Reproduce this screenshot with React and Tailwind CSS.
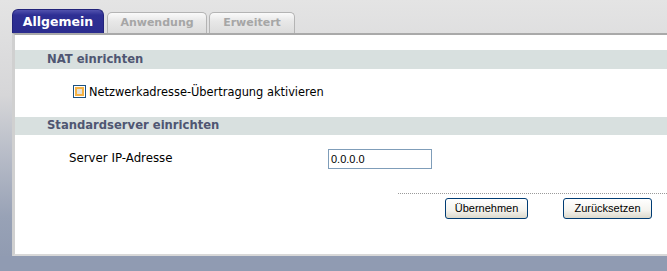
export default function App() {
  const font = { fontFamily: '"DejaVu Sans", Verdana, sans-serif' }
  return (
    <div
      className="w-[667px] h-[271px] flex flex-col overflow-hidden bg-[linear-gradient(180deg,#e4e4e4_0%,#d6d6d8_35%,#b6bbc7_58%,#98a2b6_80%,#8e99b0_100%)]"
      style={font}
    >
      {/* Tabs */}
      <div className="flex items-end pl-[12px] pt-[9px] h-[33px] shrink-0">
        <div className="w-[92px] h-[24px] rounded-t-[6px] bg-[linear-gradient(180deg,#5252ae_0%,#2e2f94_22%,#2b2c8e_100%)] border border-[#22237a] border-b-0 flex items-center justify-center text-white font-bold text-[12.5px] pt-[1px]">
          Allgemein
        </div>
        <div className="ml-[3px] w-[100px] h-[21px] rounded-t-[5px] bg-[linear-gradient(180deg,#fafafa_0%,#e8e8e8_40%,#dcdcdc_100%)] border border-[#b4b4b4] border-b-0 flex items-center justify-center text-[#a6a6a6] font-bold text-[11px]">
          Anwendung
        </div>
        <div className="ml-[2px] w-[86px] h-[21px] rounded-t-[5px] bg-[linear-gradient(180deg,#fafafa_0%,#e8e8e8_40%,#dcdcdc_100%)] border border-[#b4b4b4] border-b-0 flex items-center justify-center text-[#a6a6a6] font-bold text-[11px]">
          Erweitert
        </div>
      </div>

      {/* Panel */}
      <div className="ml-[12px] h-[223px] shrink-0 bg-white border-t-2 border-[#a9a9a9] border-l-[3px] border-l-[#d0d0d0] border-b-[2px] border-b-[#d8d8d8] flex flex-col">
        <div className="mt-[15px] h-[19px] bg-[#d8e0df] flex items-center pl-[32px] text-[#4f5672] font-bold text-[11.6px]">
          NAT einrichten
        </div>

        <div className="h-[48px] flex items-center pl-[58px] text-[11.4px] text-black">
          <span className="w-[13px] h-[13px] border border-[#1c5180] bg-white p-[1px] mr-[3px] mt-[-3px]">
            <span className="block w-full h-full border-2 border-[#f5b244] bg-[#e2e2dc]"></span>
          </span>
          Netzwerkadresse-Übertragung aktivieren
        </div>

        <div className="h-[18px] bg-[#d8e0df] flex items-center pl-[32px] text-[#4f5672] font-bold text-[11.6px]">
          Standardserver einrichten
        </div>

        <div className="mt-[14px] h-[20px] flex items-center pl-[54px] text-[11.8px] text-black">
          <span className="w-[259px]">Server IP-Adresse</span>
          <div
            className="w-[104px] h-[20px] border border-[#7f9db9] flex items-center pl-[2px] text-[11px]"
            style={{ fontFamily: '"Liberation Sans", Tahoma, sans-serif' }}
          >
            0.0.0.0
          </div>
        </div>

        <div className="mt-[24px] ml-[383px] border-t border-dotted border-[#9a9a9a]"></div>

        <div
          className="mt-[4px] flex pl-[430px] gap-[35px] text-[11px] text-black"
          style={{ fontFamily: '"Liberation Sans", Tahoma, sans-serif' }}
        >
          <div className="w-[83px] h-[21px] rounded-[3px] border border-[#003c74] bg-[linear-gradient(180deg,#ffffff_0%,#f4f3ee_60%,#dcd9cc_100%)] flex items-center justify-center">
            Übernehmen
          </div>
          <div className="w-[89px] h-[21px] rounded-[3px] border border-[#003c74] bg-[linear-gradient(180deg,#ffffff_0%,#f4f3ee_60%,#dcd9cc_100%)] flex items-center justify-center">
            Zurücksetzen
          </div>
        </div>
      </div>

      <div className="flex-1 bg-[#909bb2]"></div>
    </div>
  )
}
